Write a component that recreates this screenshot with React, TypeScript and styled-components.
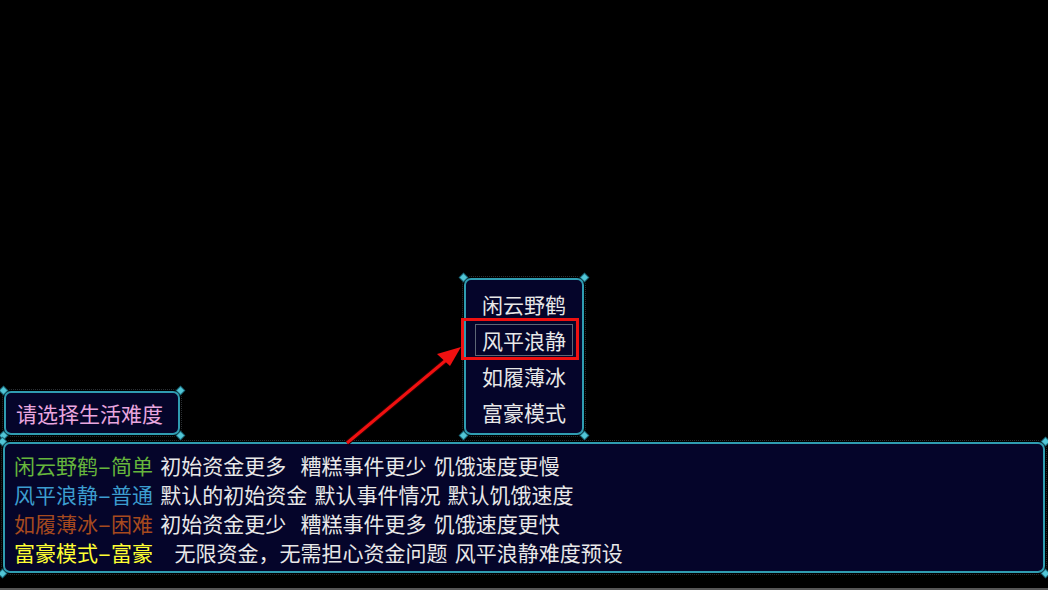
import React from 'react';
import styled, { createGlobalStyle } from 'styled-components';

const TEAL = '#2f9cb1';
const GEM = '#52c6d6';
const NAVY = '#05052a';

const GlobalStyle = createGlobalStyle`
  html, body {
    margin: 0;
    padding: 0;
    background: #000000;
  }
  body {
    font-family: "Noto Sans CJK SC", "Noto Sans", sans-serif;
  }
`;

type Level = {
  name: string,
  tag: string,
  color: string,
  desc: string,
};

const levels: Level[] = [
  { name: '闲云野鹤', tag: '简单', color: '#66b63c', desc: ' 初始资金更多  糟糕事件更少 饥饿速度更慢' },
  { name: '风平浪静', tag: '普通', color: '#3c9dcf', desc: ' 默认的初始资金 默认事件情况 默认饥饿速度' },
  { name: '如履薄冰', tag: '困难', color: '#a64a1e', desc: ' 初始资金更少  糟糕事件更多 饥饿速度更快' },
  { name: '富豪模式', tag: '富豪', color: '#ffff33', desc: '   无限资金，无需担心资金问题 风平浪静难度预设' },
];

const selected = 1;

type Vert = 'top' | 'bottom';
type Horiz = 'left' | 'right';

const corners: [Vert, Horiz][] = [
  ['top', 'left'],
  ['top', 'right'],
  ['bottom', 'left'],
  ['bottom', 'right'],
];

// framed box with little gem studs on each corner
const Panel = ({ className, children }: { className?: string, children?: React.ReactNode }) => (
  <Frame className={className}>
    {corners.map(([v, h]) => (
      <Gem key={v + h} $v={v} $h={h} />
    ))}
    {children}
  </Frame>
);

export default function App() {
  return (
    <Page>
      <GlobalStyle />
      <TopRow>
        <TitlePanel>请选择生活难度</TitlePanel>
        <MenuPanel>
          {levels.map((level, i) => (
            <MenuItem key={level.name} $active={i === selected}>
              {level.name}
              {i === selected && <Highlight />}
            </MenuItem>
          ))}
        </MenuPanel>
      </TopRow>
      <InfoPanel>
        {levels.map((level) => (
          <InfoRow key={level.name}>
            <Tag $color={level.color}>
              {level.name}<Dash>-</Dash>{level.tag}
            </Tag>
            {level.desc}
          </InfoRow>
        ))}
      </InfoPanel>
      <Pointer viewBox="0 0 1048 590">
        <line x1="347" y1="443" x2="451" y2="356" stroke="#2a0000" strokeWidth="5" />
        <line x1="347" y1="443" x2="451" y2="356" stroke="#f01010" strokeWidth="3" />
        <polygon points="461,347 437,354 450,366" fill="#f01010" />
      </Pointer>
    </Page>
  );
}

const Page = styled.div`
  position: relative;
  width: 1048px;
  height: 590px;
  box-sizing: border-box;
  display: flex;
  flex-direction: column;
  justify-content: flex-end;
  background: #000000;
  border-bottom: 2px solid #565656;
  overflow: hidden;
`;

const Frame = styled.div`
  position: relative;
  box-sizing: border-box;
  border: 2px solid ${TEAL};
  border-radius: 7px;
  background: ${NAVY};
  outline: 1px dotted #2b2f33;
  outline-offset: 1px;
`;

const Gem = styled.i<{ $v: Vert, $h: Horiz }>`
  position: absolute;
  ${(props) => props.$v}: -5px;
  ${(props) => props.$h}: -5px;
  width: 5px;
  height: 5px;
  background: ${GEM};
  box-shadow: 0 0 0 1px #1d6f80;
  transform: rotate(45deg);
`;

const TopRow = styled.div`
  display: grid;
  grid-template-columns: 1fr 120px 1fr;
  align-items: end;
  margin-bottom: 7px;
`;

const TitlePanel = styled(Panel)`
  justify-self: start;
  width: 176px;
  height: 44px;
  margin-left: 4px;
  padding: 0 10px;
  font-size: 21px;
  line-height: 40px;
  color: #e9a6df;
  white-space: nowrap;
`;

const MenuPanel = styled(Panel)`
  width: 120px;
  height: 157px;
  padding: 6px 0 3px;
  display: flex;
  flex-direction: column;
  align-items: center;
`;

const MenuItem = styled.div<{ $active: boolean }>`
  position: relative;
  box-sizing: border-box;
  width: 98px;
  height: 32px;
  margin: 2px 0;
  display: flex;
  align-items: center;
  justify-content: center;
  font-size: 21px;
  color: #e8e8e8;
  border: 1px solid ${(props) => props.$active ? '#5d6675' : 'transparent'};
`;

const Highlight = styled.span`
  position: absolute;
  left: -15px;
  right: -7px;
  top: -7px;
  bottom: -5px;
  border: 3px solid #ee1111;
  pointer-events: none;
`;

const InfoPanel = styled(Panel)`
  margin: 0 3px 15px;
  height: 131px;
  padding: 7px 9px 4px;
`;

const InfoRow = styled.div`
  height: 29px;
  font-size: 21px;
  line-height: 29px;
  color: #e8e8e8;
  white-space: pre;
  word-spacing: 2.5px;
`;

const Tag = styled.span<{ $color: string }>`
  color: ${(props) => props.$color};
`;

const Dash = styled.span`
  display: inline-block;
  width: 13px;
  text-align: center;
  transform: scaleX(1.9);
`;

const Pointer = styled.svg`
  position: absolute;
  top: 0;
  left: 0;
  width: 1048px;
  height: 590px;
  pointer-events: none;
`;
